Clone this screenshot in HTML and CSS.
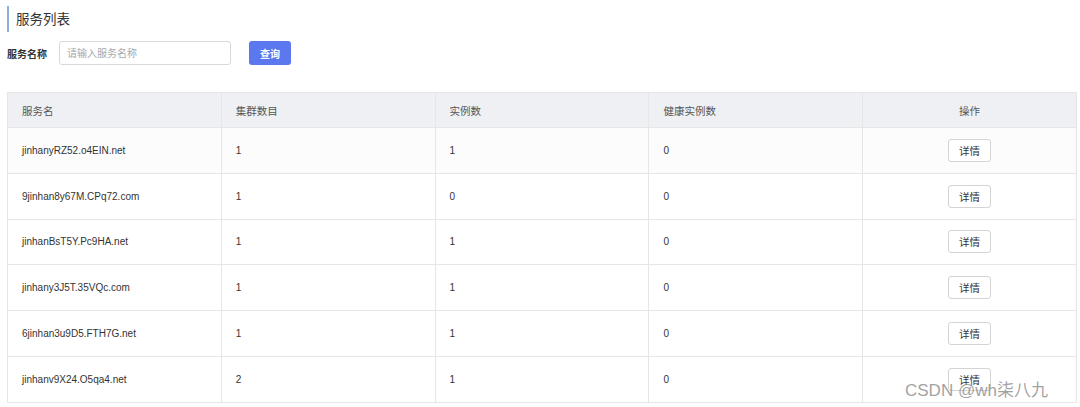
FILE: index.html
```html
<!DOCTYPE html>
<html lang="zh">
<head>
<meta charset="utf-8">
<link rel="stylesheet" href="styles.css">
</head>
<body>
<div class="page">
  <h2 class="title">服务列表</h2>
  <div class="search">
    <label class="search-label">服务名称</label>
    <input class="search-input" placeholder="请输入服务名称">
    <button class="btn-primary">查询</button>
  </div>
  <table class="grid">
    <thead>
      <tr><th>服务名</th><th>集群数目</th><th>实例数</th><th>健康实例数</th><th class="c">操作</th></tr>
    </thead>
    <tbody>
      <tr><td>jinhanyRZ52.o4EIN.net</td><td>1</td><td>1</td><td>0</td><td class="c"><button class="btn">详情</button></td></tr>
      <tr><td>9jinhan8y67M.CPq72.com</td><td>1</td><td>0</td><td>0</td><td class="c"><button class="btn">详情</button></td></tr>
      <tr><td>jinhanBsT5Y.Pc9HA.net</td><td>1</td><td>1</td><td>0</td><td class="c"><button class="btn">详情</button></td></tr>
      <tr><td>jinhany3J5T.35VQc.com</td><td>1</td><td>1</td><td>0</td><td class="c"><button class="btn">详情</button></td></tr>
      <tr><td>6jinhan3u9D5.FTH7G.net</td><td>1</td><td>1</td><td>0</td><td class="c"><button class="btn">详情</button></td></tr>
      <tr><td>jinhanv9X24.O5qa4.net</td><td>2</td><td>1</td><td>0</td><td class="c"><button class="btn">详情</button></td></tr>
    </tbody>
  </table>
  <div class="watermark">CSDN @wh柒八九</div>
</div>
</body>
</html>
```

FILE: styles.css
```css
* { box-sizing: border-box; }
html, body { margin: 0; padding: 0; background: #fff; }
body {
  font-family: "Liberation Sans", Arial, "Noto Sans CJK SC", sans-serif;
  color: #333;
  overflow: hidden;
}
.page { position: relative; padding: 6px 3px 0 7px; height: 407px; }
.title {
  margin: 0;
  height: 26px;
  line-height: 28px;
  font-size: 13.5px;
  font-weight: normal;
  color: #333;
  border-left: 2px solid #8fb0d6;
  padding-left: 7px;
}
.search {
  display: flex;
  align-items: center;
  margin-top: 9px;
  height: 24px;
}
.search-label {
  font-size: 10px;
  font-weight: bold;
  color: #333;
  width: 52px;
}
.search-input {
  width: 172px;
  height: 24px;
  border: 1px solid #d9d9d9;
  border-radius: 3px;
  padding: 0 7px;
  font-size: 10px;
  font-family: inherit;
  color: #333;
  outline: none;
}
.search-input::placeholder { color: #a8a8a8; }
.btn-primary {
  margin-left: 18px;
  width: 42px;
  height: 24px;
  border: none;
  border-radius: 3px;
  background: #5b78ef;
  color: #fff;
  font-size: 10px;
  font-weight: bold;
  font-family: inherit;
  padding: 0;
}
.grid {
  margin-top: 27px;
  width: 1070px;
  border-collapse: collapse;
  table-layout: fixed;
  font-size: 10px;
}
.grid th, .grid td {
  border: 1px solid #e6e6e6;
  text-align: left;
  padding: 0 0 0 14px;
}
.grid th {
  height: 35px;
  background: #eef0f3;
  font-weight: normal;
  color: #555;
  font-size: 10.5px;
}
.grid td {
  height: 45.8px;
  color: #333;
  background: #fff;
}
.grid tbody tr:first-child td { background: #fcfcfd; }
.grid .c { text-align: center; padding: 0; }
.btn {
  width: 43px;
  height: 23px;
  border: 1px solid #d4d4d4;
  border-radius: 3px;
  background: #fff;
  font-size: 10.5px;
  font-family: inherit;
  color: #333;
  padding: 0;
}
.watermark {
  position: absolute;
  left: 905px;
  top: 376px;
  font-size: 17px;
  color: rgba(130, 130, 130, 0.75);
  font-family: "Liberation Sans", "Noto Sans CJK SC", sans-serif;
  white-space: nowrap;
}
```
